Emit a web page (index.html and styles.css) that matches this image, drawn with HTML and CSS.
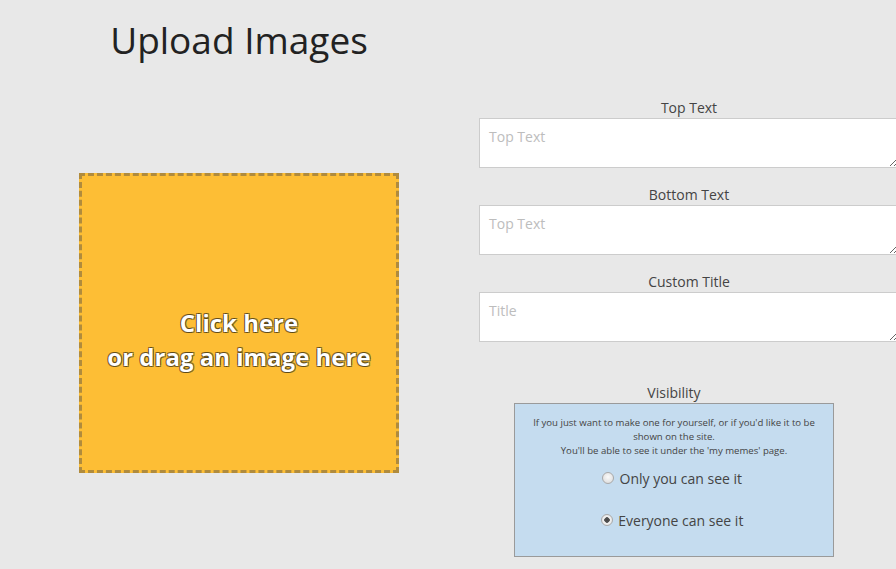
FILE: index.html
```html
<!DOCTYPE html>
<html lang="en">
<head>
    <meta charset="UTF-8">
    <title>Upload Images</title>
    <link rel="stylesheet" href="styles.css">
</head>
<body>
    <div class="page">
        <div class="left-col">
            <h1>Upload Images</h1>
            <div class="dropzone">
                <span>Click here<br>or drag an image here</span>
            </div>
        </div>
        <div class="right-col">
            <div class="field">
                <label for="topText">Top Text</label>
                <textarea id="topText" placeholder="Top Text"></textarea>
            </div>
            <div class="field">
                <label for="bottomText">Bottom Text</label>
                <textarea id="bottomText" placeholder="Top Text"></textarea>
            </div>
            <div class="field">
                <label for="customTitle">Custom Title</label>
                <textarea id="customTitle" placeholder="Title"></textarea>
            </div>
            <div class="visibility">
                <div class="vis-label">Visibility</div>
                <div class="vis-box">
                    <p>If you just want to make one for yourself, or if you'd like it to be shown on the site.<br>You'll be able to see it under the 'my memes' page.</p>
                    <label class="radio-row"><input type="radio" name="vis"> Only you can see it</label>
                    <label class="radio-row"><input type="radio" name="vis" checked> Everyone can see it</label>
                </div>
            </div>
        </div>
    </div>
</body>
</html>
```

FILE: styles.css
```css
* {
    box-sizing: border-box;
}
body {
    margin: 0;
    background: #e8e8e8;
    font-family: "Open Sans", Arial, sans-serif;
    color: #444;
    overflow: hidden;
}
.page {
    display: flex;
    padding-left: 79px;
    gap: 80px;
}
.left-col {
    width: 320px;
    flex-shrink: 0;
}
h1 {
    margin: 0;
    padding-top: 15px;
    font-size: 37px;
    font-weight: 400;
    line-height: 50px;
    color: #222;
    text-align: center;
}
.dropzone {
    margin-top: 108px;
    width: 320px;
    height: 300px;
    background: #fdbe35;
    border: 3px dashed #b08b3d;
    display: flex;
    align-items: center;
    justify-content: center;
    text-align: center;
    cursor: pointer;
}
.dropzone span {
    font-size: 24px;
    font-weight: 700;
    line-height: 34px;
    color: #fff;
    text-shadow: -1px -1px 0 rgba(60, 50, 20, 0.6), 1px -1px 0 rgba(60, 50, 20, 0.6),
                 -1px 1px 0 rgba(60, 50, 20, 0.6), 1px 1px 0 rgba(60, 50, 20, 0.6);
    margin-top: 34px;
}
.right-col {
    width: 420px;
    flex-shrink: 0;
    padding-top: 98px;
}
.field {
    margin-bottom: 17px;
}
.field label {
    display: block;
    text-align: center;
    font-size: 14px;
    line-height: 19px;
    margin-bottom: 1px;
}
textarea {
    display: block;
    width: 420px;
    height: 50px;
    border: 1px solid #ccc;
    background: #fff;
    padding: 8px 9px;
    font-family: "Open Sans", Arial, sans-serif;
    font-size: 14px;
    line-height: 19px;
    color: #444;
}
textarea::placeholder {
    color: #bdbdbd;
}
.visibility {
    width: 320px;
    margin-left: 35px;
    margin-top: 41px;
}
.vis-label {
    text-align: center;
    font-size: 14px;
    line-height: 19px;
    margin-bottom: 1px;
}
.vis-box {
    background: #c5dcef;
    border: 1px solid #9a9a9a;
    height: 154px;
    padding: 12px 14px 0;
    text-align: center;
}
.vis-box p {
    margin: 0 0 11px;
    font-size: 9.6px;
    line-height: 14px;
    color: #444;
}
.radio-row {
    display: block;
    font-size: 14px;
    line-height: 19px;
    margin-bottom: 23px;
    padding-right: 4px;
}
.radio-row input {
    appearance: none;
    -webkit-appearance: none;
    width: 12px;
    height: 12px;
    margin: 0 2px 0 0;
    vertical-align: 0;
    border: 1px solid #a9a9a9;
    border-radius: 50%;
    background: radial-gradient(circle at 50% 40%, #fafafa 0%, #e2e2e2 70%, #cfcfcf 100%);
}
.radio-row input:checked {
    background: radial-gradient(circle, #444 0, #555 2.5px, #f2f2f2 3px, #dedede 100%);
}
```
